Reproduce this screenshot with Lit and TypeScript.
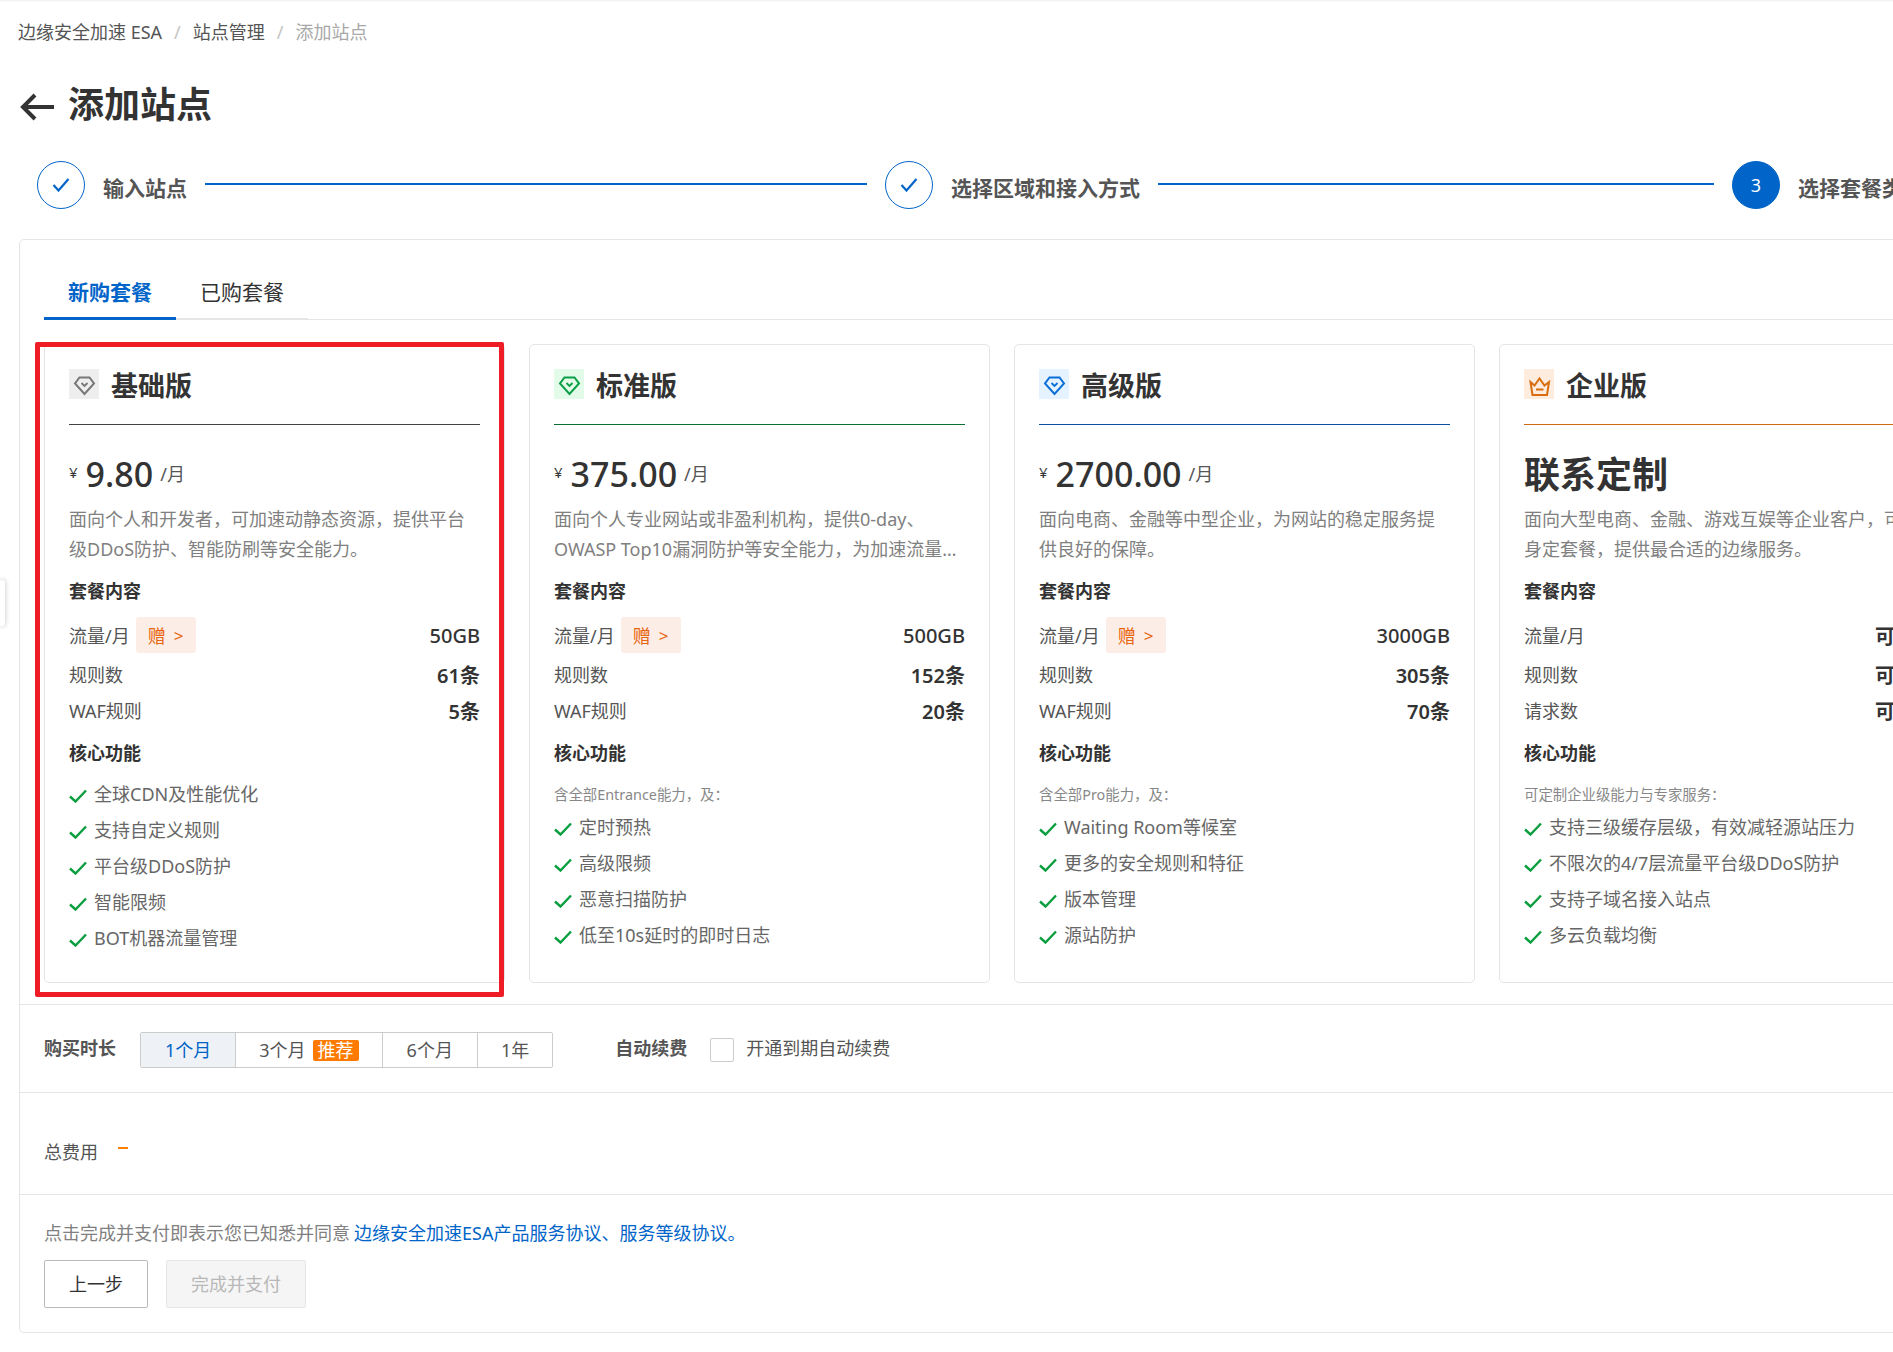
import { LitElement, html, css, svg } from "lit";
import { customElement } from "lit/decorators.js";

type Plan = {
  name: string; kind: string; price?: string; desc: string;
  rows: [string, string, boolean][]; note?: string; features: string[];
};

const plans: Plan[] = [
  { name: "基础版", kind: "basic", price: "9.80",
    desc: "面向个人和开发者，可加速动静态资源，提供平台级DDoS防护、智能防刷等安全能力。",
    rows: [["流量/月", "50GB", true], ["规则数", "61条", false], ["WAF规则", "5条", false]],
    features: ["全球CDN及性能优化", "支持自定义规则", "平台级DDoS防护", "智能限频", "BOT机器流量管理"] },
  { name: "标准版", kind: "standard", price: "375.00",
    desc: "面向个人专业网站或非盈利机构，提供0-day、OWASP Top10漏洞防护等安全能力，为加速流量提供更全面的保护。",
    rows: [["流量/月", "500GB", true], ["规则数", "152条", false], ["WAF规则", "20条", false]],
    note: "含全部Entrance能力，及：",
    features: ["定时预热", "高级限频", "恶意扫描防护", "低至10s延时的即时日志"] },
  { name: "高级版", kind: "pro", price: "2700.00",
    desc: "面向电商、金融等中型企业，为网站的稳定服务提供良好的保障。",
    rows: [["流量/月", "3000GB", true], ["规则数", "305条", false], ["WAF规则", "70条", false]],
    note: "含全部Pro能力，及：",
    features: ["Waiting Room等候室", "更多的安全规则和特征", "版本管理", "源站防护"] },
  { name: "企业版", kind: "ent",
    desc: "面向大型电商、金融、游戏互娱等企业客户，可量身定套餐，提供最合适的边缘服务。",
    rows: [["流量/月", "可定制", false], ["规则数", "可定制", false], ["请求数", "可定制", false]],
    note: "可定制企业级能力与专家服务：",
    features: ["支持三级缓存层级，有效减轻源站压力", "不限次的4/7层流量平台级DDoS防护", "支持子域名接入站点", "多云负载均衡"] },
];

const gem = svg`<path d="M10.5 8.5H20.5L25 14.5L15.5 25L6 14.5Z" fill="none" stroke="currentColor" stroke-width="2"/><path d="M12.5 14L15.5 17L18.5 14" fill="none" stroke="currentColor" stroke-width="1.8"/>`;
const crown = svg`<path d="M6.5 13L10.5 16.5L15.5 9.5L20.5 16.5L25 13L23 26H8.5Z" fill="none" stroke="currentColor" stroke-width="2" stroke-linejoin="miter"/><path d="M12 20.5H19.5" fill="none" stroke="currentColor" stroke-width="2"/>`;
const check = html`<svg class="chk" viewBox="0 0 18 14"><path d="M1 7.5L6.5 12.5L17 1.5" fill="none" stroke="currentColor" stroke-width="2.4"/></svg>`;
const stepCheck = html`<svg viewBox="0 0 18 14" class="stepchk"><path d="M1.5 7L6.5 12.5L16.5 1" fill="none" stroke="currentColor" stroke-width="2.2"/></svg>`;

@customElement("app-root")
export class AppRoot extends LitElement {
  static styles = css`
    :host {
      display: block; position: relative; width: 100%; height: 1352px; overflow: hidden;
      background: #fff; color: #333;
      font-family: "Noto Sans", "Noto Sans CJK SC", sans-serif; font-size: 18px;
      box-shadow: inset 0 2px 2px -1px rgba(0,0,0,.07);
    }
    .crumbs { display: flex; padding: 18px 0 0 18px; line-height: 28px; color: #555; white-space: nowrap; }
    .crumbs .sep { color: #c4c4c4; margin: 0 12px; }
    .crumbs .cur { color: #a8a8a8; }
    .title { display: flex; align-items: center; height: 50px; margin-top: 31px; padding-left: 19px; gap: 13px; font-size: 36px; font-weight: 700; color: #333; white-space: nowrap; }
    .title svg { width: 36px; height: 28px; margin-top: 10px; color: #333; }
    .steps { display: flex; align-items: center; height: 48px; margin-top: 34px; padding-left: 37px; white-space: nowrap; }
    .circle { flex: none; width: 48px; height: 48px; box-sizing: border-box; border-radius: 50%; border: 1px solid #0064c8; color: #0064c8; display: flex; align-items: center; justify-content: center; }
    .circle.on { background: #0064c8; color: #fff; font-size: 18px; }
    .stepchk { width: 18px; height: 14px; }
    .slabel { margin: 4px 0 0 18px; font-size: 21px; font-weight: 700; color: #555; }
    .sline { flex: none; height: 2px; background: #0064c8; margin: -2px 18px 0 18px; }
    .sline.a { width: 662px; }
    .sline.b { width: 556px; }
    .panel { width: 2100px; box-sizing: border-box; margin: 30px 0 0 19px; border: 1px solid #e5e5e5; border-radius: 5px; height: 1094px; }
    .tabs { display: flex; margin-left: 24px; padding-top: 39px; border-bottom: 1px solid #e5e5e5; }
    .tab { width: 132px; box-sizing: border-box; padding: 0 24px 13px; line-height: 26px; font-size: 21px; color: #333; border-bottom: 2px solid #e5e5e5; margin-bottom: -1px; white-space: nowrap; }
    .tab.on { color: #0064c8; font-weight: 700; padding-bottom: 12px; border-bottom: 3px solid #0064c8; }
    .cards { display: flex; gap: 24px; padding: 24px 0 21px 24px; border-bottom: 1px solid #e5e5e5; }
    .card { position: relative; flex: none; width: 461px; height: 639px; box-sizing: border-box; padding: 0 24px 0 24px; border: 1px solid #e5e5e5; border-radius: 5px; }
    .red { position: absolute; left: -10px; top: -3px; width: 469px; height: 655px; box-sizing: border-box; border: 5px solid #ee1c25; border-radius: 2px; pointer-events: none; }
    .head { display: flex; align-items: center; gap: 12px; height: 30px; padding: 24px 0 25px; border-bottom: 1px solid #444; font-size: 27px; font-weight: 700; color: #333; white-space: nowrap; }
    .ico { flex: none; width: 30px; height: 30px; }
    .basic .ico { background: #eeeeee; color: #777; }
    .standard .ico { background: #e3fbe9; color: #0a9e46; }
    .pro .ico { background: #e5f2ff; color: #0a6fd6; }
    .ent .ico { background: #feecde; color: #d96e10; }
    .standard .head { border-color: #0a6e35; }
    .pro .head { border-color: #0a52a0; }
    .ent .head { border-color: #d06a10; }
    .price { display: flex; align-items: center; height: 48px; margin-top: 25px; color: #333; white-space: nowrap; }
    .price .y { font-size: 15px; margin-right: 8px; margin-top: -4px; }
    .price .n { font-size: 34px; font-weight: 500; line-height: 48px; }
    .price .u { font-size: 18px; color: #555; margin-left: 7px; margin-top: -3px; }
    .price .c { font-size: 36px; font-weight: 700; margin-top: -4px; }
    .desc { height: 60px; margin-top: 6px; line-height: 30px; color: #808080; display: -webkit-box; -webkit-box-orient: vertical; -webkit-line-clamp: 2; overflow: hidden; }
    .sec { font-weight: 700; line-height: 26px; color: #333; white-space: nowrap; }
    .desc + .sec { margin-top: 14px; }
    .rows { margin-top: 13px; }
    .row { display: flex; align-items: center; height: 36px; color: #555; white-space: nowrap; }
    .row.first { margin-bottom: 3px; }
    .row .v { margin-left: auto; font-size: 20px; font-weight: 600; color: #333; }
    .row .v.lite { font-weight: 500; }
    .gift { display: flex; align-items: center; justify-content: center; gap: 8px; width: 60px; height: 36px; margin-left: 6px; border-radius: 3px; background: #fcede6; color: #e8640c; }
    .gift span { font-size: 17px; }
    .rows + .sec { margin-top: 12px; }
    .feats { margin-top: 9px; }
    .note { font-size: 14.4px; line-height: 24px; height: 24px; margin-top: 17px; margin-bottom: 1px; color: #888; white-space: nowrap; }
    .feat { display: flex; align-items: center; gap: 7px; height: 36px; color: #666; white-space: nowrap; }
    .chk { flex: none; width: 18px; height: 14px; margin-top: 5px; color: #0a9e3f; }
    .buy { display: flex; align-items: center; height: 88px; box-sizing: border-box; padding-left: 24px; border-bottom: 1px solid #e5e5e5; white-space: nowrap; }
    .lbl { font-weight: 700; color: #555; margin-top: -3px; }
    .seg { display: flex; height: 36px; box-sizing: border-box; margin: 3px 0 0 24px; border: 1px solid #ccc; border-radius: 2px; }
    .seg div { display: flex; align-items: center; padding: 0 23px 2px; color: #555; border-left: 1px solid #ccc; }
    .seg div:first-child { border-left: 0; background: #eef2f7; color: #0064c8; padding: 0 24px 2px; }
    .seg div:nth-child(3) { padding: 0 24px 2px; }
    .seg .badge { margin: 2px 0 0 7px; padding: 0 5px; height: 21px; border: 0; border-radius: 2px; background: #ff7a00; color: #fff; line-height: 21px; }
    .lbl.auto { margin-left: 62px; }
    .cb { width: 24px; height: 24px; box-sizing: border-box; margin: 3px 12px 0 23px; border: 1px solid #ccc; border-radius: 2px; }
    .cbt { color: #555; margin-top: -3px; }
    .total { display: flex; align-items: center; height: 102px; box-sizing: border-box; padding: 14px 0 0 24px; border-bottom: 1px solid #e5e5e5; color: #555; white-space: nowrap; }
    .dash { width: 10px; height: 2px; margin: -6px 0 0 20px; background: #ff8000; }
    .foot { padding: 25px 0 0 24px; white-space: nowrap; }
    .agree { line-height: 26px; color: #808080; }
    .agree a { color: #0064c8; text-decoration: none; margin-left: 4px; }
    .btns { display: flex; gap: 18px; margin-top: 14px; }
    .btn { height: 48px; box-sizing: border-box; padding-bottom: 2px; border: 1px solid #bbb; border-radius: 2px; display: flex; align-items: center; justify-content: center; width: 104px; color: #333; }
    .btn.off { width: 140px; background: #f5f5f5; border-color: #e5e5e5; color: #b8b8b8; }
    .edge { position: absolute; left: 0; top: 580px; width: 5px; height: 46px; background: #fff; border-radius: 0 3px 3px 0; box-shadow: 0 0 5px rgba(0,0,0,.25); }
  `;

  private card(p: Plan, i: number) {
    return html`<div class="card ${p.kind}">
      <div class="head">
        <svg class="ico" viewBox="0 0 30 30">${p.kind === "ent" ? crown : gem}</svg>
        ${p.name}
      </div>
      <div class="price">
        ${p.price
          ? html`<span class="y">¥</span><span class="n">${p.price}</span><span class="u">/月</span>`
          : html`<span class="c">联系定制</span>`}
      </div>
      <div class="desc">${p.desc}</div>
      <div class="sec">套餐内容</div>
      <div class="rows">
        ${p.rows.map(([k, v, g], j) => html`<div class="row ${j === 0 ? "first" : ""}">
          ${k}${g ? html`<div class="gift">赠<span>&gt;</span></div>` : ""}
          <span class="v ${g ? "lite" : ""}">${v}</span>
        </div>`)}
      </div>
      <div class="sec">核心功能</div>
      <div class="feats">
        ${p.note ? html`<div class="note">${p.note}</div>` : ""}
        ${p.features.map((f) => html`<div class="feat">${check}<span>${f}</span></div>`)}
      </div>
      ${i === 0 ? html`<div class="red"></div>` : ""}
    </div>`;
  }

  render() {
    return html`
      <div class="crumbs">
        <span>边缘安全加速 ESA</span><span class="sep">/</span><span>站点管理</span><span class="sep">/</span><span class="cur">添加站点</span>
      </div>
      <div class="title">
        <svg viewBox="0 0 36 28"><path d="M35 14H4M16 2L4 14L16 26" fill="none" stroke="currentColor" stroke-width="4"/></svg>
        添加站点
      </div>
      <div class="steps">
        <div class="circle">${stepCheck}</div><div class="slabel">输入站点</div><div class="sline a"></div>
        <div class="circle">${stepCheck}</div><div class="slabel">选择区域和接入方式</div><div class="sline b"></div>
        <div class="circle on">3</div><div class="slabel">选择套餐类型</div>
      </div>
      <div class="panel">
        <div class="tabs"><div class="tab on">新购套餐</div><div class="tab">已购套餐</div></div>
        <div class="cards">${plans.map((p, i) => this.card(p, i))}</div>
        <div class="buy">
          <span class="lbl">购买时长</span>
          <div class="seg">
            <div>1个月</div>
            <div>3个月<span class="badge">推荐</span></div>
            <div>6个月</div>
            <div>1年</div>
          </div>
          <span class="lbl auto">自动续费</span>
          <span class="cb"></span>
          <span class="cbt">开通到期自动续费</span>
        </div>
        <div class="total">总费用<span class="dash"></span></div>
        <div class="foot">
          <div class="agree">点击完成并支付即表示您已知悉并同意<a>边缘安全加速ESA产品服务协议、服务等级协议。</a></div>
          <div class="btns"><div class="btn">上一步</div><div class="btn off">完成并支付</div></div>
        </div>
      </div>
      <div class="edge"></div>
    `;
  }
}
